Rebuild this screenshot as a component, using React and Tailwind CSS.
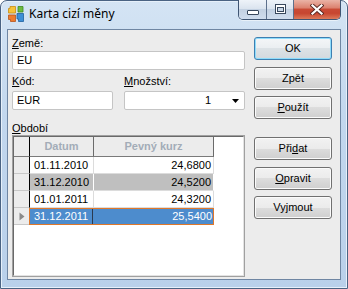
const F = { fontFamily: '"Liberation Sans", Arial, sans-serif' };

function TitleIcon() {
  return (
    <svg width="16" height="16" viewBox="0 0 16 16" className="shrink-0">
      <path d="M2 0.5h5.5v6.5h-7v-4.5h1.5z" fill="#f6c33a" stroke="#c98d10" strokeWidth="0.8" />
      <path d="M10 0.5h5v5.5h-5z" fill="#6dbb3f" stroke="#3d8a1f" strokeWidth="0.8" />
      <path d="M0.5 9h7v6.5h-5v-2h-2z" fill="#ee7b2f" stroke="#b8541a" strokeWidth="0.8" />
      <path d="M9 7.5h6.5v8h-5v-2.5h-1.5z" fill="#3d8fd6" stroke="#1f5f9e" strokeWidth="0.8" />
    </svg>
  );
}

function CaptionButtons() {
  return (
    <div className="flex -mt-px h-[20px] rounded-b-[5px] border border-t-0 border-[#3f5573] overflow-hidden self-start shadow-[0_1px_0_#ffffff80]">
      <div className="w-[28px] h-full flex items-center justify-center border-r border-[#5d708c] bg-[linear-gradient(#eef3f9_0%,#dbe4ef_45%,#c3d1e2_50%,#cfdced_100%)]">
        <svg width="12" height="5" viewBox="0 0 12 5" className="mt-[5px]">
          <rect x="0.5" y="0.5" width="11" height="4" rx="0.5" fill="#ffffff" stroke="#38475c" />
        </svg>
      </div>
      <div className="w-[27px] h-full flex items-center justify-center border-r border-[#5d708c] bg-[linear-gradient(#eef3f9_0%,#dbe4ef_45%,#c3d1e2_50%,#cfdced_100%)]">
        <svg width="11" height="10" viewBox="0 0 11 10" className="-mt-[2px]">
          <rect x="0.5" y="0.5" width="10" height="9" fill="#ffffff" stroke="#38475c" />
          <rect x="2.5" y="3.5" width="6" height="4" fill="#c9d6e6" stroke="#38475c" />
        </svg>
      </div>
      <div className="w-[46px] h-full flex items-center justify-center bg-[linear-gradient(#eab3a6_0%,#dc8371_40%,#c94a35_50%,#c74630_70%,#dd7a5a_100%)]">
        <svg width="14" height="11" viewBox="0 0 14 11" className="-mt-[1px]">
          <path d="M2.5 1.5L11.5 9.5M11.5 1.5L2.5 9.5" stroke="#5a2a24" strokeWidth="4" strokeLinecap="square" />
          <path d="M2.5 1.5L11.5 9.5M11.5 1.5L2.5 9.5" stroke="#ffffff" strokeWidth="2.2" strokeLinecap="square" />
        </svg>
      </div>
    </div>
  );
}

function Btn({ children, def, className = '' }) {
  return (
    <div
      className={
        def
          ? `h-[23px] w-[78px] rounded-[3px] border border-[#3c7fb1] shadow-[inset_0_0_0_1px_#8fdcfb] bg-[linear-gradient(#f4f6f8_0%,#eaeef1_50%,#dce2e6_50%,#d3d9de_100%)] flex items-center justify-center text-[11px] text-black ${className}`
          : `h-[23px] w-[78px] rounded-[3px] border border-[#707070] shadow-[inset_0_0_0_1px_#fbfbfb] bg-[linear-gradient(#f2f2f2_0%,#ebebeb_50%,#dddddd_50%,#cfcfcf_100%)] flex items-center justify-center text-[11px] text-black ${className}`
      }
    >
      <span className="leading-none">{children}</span>
    </div>
  );
}

function Field({ children, className = '' }) {
  return (
    <div className={`h-[19px] bg-white border border-[#c5c5c5] rounded-[2px] flex items-center px-[4px] text-[11px] text-black ${className}`}>
      {children}
    </div>
  );
}

const rows = [
  { d: '01.11.2010', v: '24,6800', s: 'n' },
  { d: '31.12.2010', v: '24,5200', s: 'g' },
  { d: '01.01.2011', v: '24,3200', s: 'n' },
  { d: '31.12.2011', v: '25,5400', s: 'b' },
];

function Grid() {
  return (
    <div className="h-[142px] border border-[#a0a0a0]">
      <div className="h-full border border-t-[#696969] border-l-[#696969] border-r-[#e3e3e3] border-b-[#e3e3e3] bg-white">
        <div className="flex h-[20px]">
          <div className="w-[16px] h-full bg-[#ececec] border-r border-b border-r-black border-b-[#7a7a7a]" />
          <div className="w-[64px] h-full bg-[#ececec] border-r border-b border-r-[#6b6b6b] border-b-[#7a7a7a] flex items-center justify-center text-[11px] font-bold text-[#a3acb8]">
            Datum
          </div>
          <div className="w-[120px] h-full bg-[#ececec] border-r border-b border-r-[#6b6b6b] border-b-[#7a7a7a] flex items-center justify-center text-[11px] font-bold text-[#a3acb8]">
            Pevný kurz
          </div>
        </div>
        {rows.map((r, i) =>
          r.s === 'b' ? (
            <div key={i} className="flex h-[17px]">
              <div className="w-[15px] h-full bg-[#ececec] border-b border-[#c8c8c8] flex items-center justify-center">
                <svg width="6" height="9" viewBox="0 0 6 9" className="ml-[1px]">
                  <path d="M0.5 0.5L5.5 4.5L0.5 8.5z" fill="#8a8a8a" />
                </svg>
              </div>
              <div className="w-[185px] h-full flex border border-[#e0782a] bg-[#4d8ccd] text-white text-[11px]">
                <div className="w-[63px] h-full border-r border-[#2a3a50] flex items-center pl-[4px]">{r.d}</div>
                <div className="flex-1 h-full flex items-center justify-end pr-[1px]">{r.v}</div>
              </div>
            </div>
          ) : (
            <div key={i} className="flex h-[17px]">
              <div className="w-[16px] h-full bg-[#ececec] border-r border-b border-r-black border-b-[#c8c8c8]" />
              <div
                className={
                  r.s === 'g'
                    ? 'w-[64px] h-full bg-[#bfbfbf] border-r border-b border-r-white border-b-[#dcdcdc] flex items-center pl-[4px] text-[11px] text-black'
                    : 'w-[64px] h-full bg-white border-r border-b border-[#dcdcdc] flex items-center pl-[4px] text-[11px] text-black'
                }
              >
                {r.d}
              </div>
              <div
                className={
                  r.s === 'g'
                    ? 'w-[120px] h-full bg-[#bfbfbf] border-r border-b border-r-white border-b-[#dcdcdc] flex items-center justify-end pr-[2px] text-[11px] text-black'
                    : 'w-[120px] h-full bg-white border-r border-b border-[#dcdcdc] flex items-center justify-end pr-[2px] text-[11px] text-black'
                }
              >
                {r.v}
              </div>
            </div>
          )
        )}
      </div>
    </div>
  );
}

export default function App() {
  return (
    <div className="w-[348px] h-[289px] bg-white">
      <div className="w-[348px] h-[289px] flex flex-col rounded-t-[7px] border border-[#4a6383] bg-[linear-gradient(180deg,#d4e4f4_0%,#c2d7ee_40%,#b9d0ea_100%)] shadow-[inset_0_0_0_1px_#e6f0fa]">
        <div className="h-[28px] flex items-start justify-between pl-[7px] pr-[6px]">
          <div className="flex items-center h-[24px] pt-[2px] gap-[5px]">
            <TitleIcon />
            <span className="text-[12px] text-black" style={{ fontFamily: '"Noto Sans", "Open Sans", sans-serif' }}>
              Karta cizí měny
            </span>
          </div>
          <CaptionButtons />
        </div>
        <div className="mx-[6px] h-[251px] border border-[#6f86a3] bg-[#ececec] flex gap-[9px] pl-[4px] pt-[7px]" style={F}>
          <div className="w-[233px] flex flex-col">
            <div className="h-[13px] text-[11px] leading-[13px] text-black">
              <span className="underline">Z</span>emě:
            </div>
            <Field className="mt-[1px]">EU</Field>
            <div className="flex gap-[11px] mt-[5px]">
              <div className="w-[101px] flex flex-col">
                <div className="h-[13px] text-[11px] leading-[13px] text-black">
                  <span className="underline">K</span>ód:
                </div>
                <Field className="mt-[3px]">EUR</Field>
              </div>
              <div className="w-[121px] flex flex-col">
                <div className="h-[13px] text-[11px] leading-[13px] text-black">
                  <span className="underline">M</span>nožství:
                </div>
                <Field className="mt-[3px] justify-end pr-[5px]">
                  <span className="mr-[21px]">1</span>
                  <svg width="7" height="4" viewBox="0 0 7 4">
                    <path d="M0 0H7L3.5 4z" fill="#000" />
                  </svg>
                </Field>
              </div>
            </div>
            <div className="h-[13px] mt-[12px] text-[11px] leading-[13px] text-black">
              <span className="underline">O</span>bdobí
            </div>
            <Grid />
          </div>
          <div className="w-[78px] flex flex-col">
            <Btn def>OK</Btn>
            <Btn className="mt-[7px]">Zpět</Btn>
            <Btn className="mt-[6px]">
              <span className="underline">P</span>oužít
            </Btn>
            <Btn className="mt-[18px]">
              Při<span className="underline">d</span>at
            </Btn>
            <Btn className="mt-[7px]">
              <span className="underline">O</span>pravit
            </Btn>
            <Btn className="mt-[6px]">Vyjmout</Btn>
          </div>
        </div>
      </div>
    </div>
  );
}
